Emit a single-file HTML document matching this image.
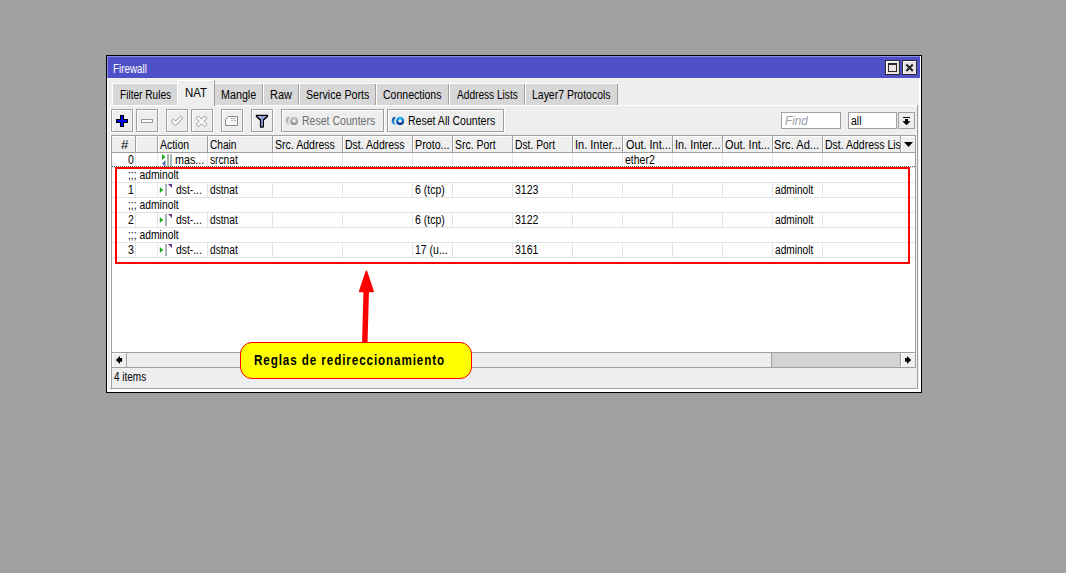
<!DOCTYPE html>
<html><head><meta charset="utf-8"><style>
html,body{margin:0;padding:0;}
body{width:1066px;height:573px;background:#a0a0a0;position:relative;overflow:hidden;font-family:"Liberation Sans", sans-serif;}
.t{position:absolute;white-space:nowrap;font-size:12px;line-height:13px;color:#000;transform-origin:0 0;}
svg{position:absolute;left:0;top:0;}
</style></head><body>
<svg width="1066" height="573" viewBox="0 0 1066 573" shape-rendering="crispEdges">
<rect x="106" y="55" width="816" height="338" fill="#000"/>
<rect x="107" y="56" width="814" height="336" fill="#ffffff"/>
<rect x="108" y="78" width="811" height="311" fill="#eeeeee"/>
<rect x="107" y="56" width="813" height="22" fill="#8c8ce4"/>
<rect x="108" y="57" width="812" height="21" fill="#5050c8"/>
<rect x="920" y="56" width="1" height="336" fill="#ffffff"/>
<rect x="885" y="60" width="15" height="15" fill="#2b2b2b"/>
<rect x="886" y="61" width="13" height="13" fill="#e8e4e8"/>
<rect x="886" y="61" width="13" height="1" fill="#ffffff"/>
<rect x="886" y="61" width="1" height="13" fill="#ffffff"/>
<rect x="902" y="60" width="15" height="15" fill="#2b2b2b"/>
<rect x="903" y="61" width="13" height="13" fill="#e8e4e8"/>
<rect x="903" y="61" width="13" height="1" fill="#ffffff"/>
<rect x="903" y="61" width="1" height="13" fill="#ffffff"/>
<rect x="888" y="63" width="9" height="9" fill="#2b2b2b"/>
<rect x="889" y="65" width="7" height="6" fill="#e8e4e8"/>
<rect x="110" y="105" width="808" height="1" fill="#ffffff"/>
<rect x="110" y="105" width="1" height="284" fill="#ffffff"/>
<rect x="917" y="105" width="1" height="284" fill="#a0a0a0"/>
<rect x="110" y="388" width="808" height="1" fill="#a0a0a0"/>
<rect x="113" y="84" width="64" height="21" fill="#d7d7d7"/>
<rect x="113" y="83" width="64" height="1" fill="#ffffff"/>
<rect x="112" y="83" width="1" height="22" fill="#ffffff"/>
<rect x="177" y="80" width="38" height="26" fill="#ffffff"/>
<rect x="178" y="81" width="36" height="25" fill="#eeeeee"/>
<rect x="214" y="80" width="1" height="26" fill="#a0a0a0"/>
<rect x="215" y="84" width="48" height="21" fill="#d7d7d7"/>
<rect x="262" y="84" width="1" height="21" fill="#a0a0a0"/>
<rect x="215" y="83" width="48" height="1" fill="#ffffff"/>
<rect x="264" y="84" width="35" height="21" fill="#d7d7d7"/>
<rect x="298" y="84" width="1" height="21" fill="#a0a0a0"/>
<rect x="264" y="83" width="35" height="1" fill="#ffffff"/>
<rect x="263" y="83" width="1" height="22" fill="#ffffff"/>
<rect x="300" y="84" width="76" height="21" fill="#d7d7d7"/>
<rect x="375" y="84" width="1" height="21" fill="#a0a0a0"/>
<rect x="300" y="83" width="76" height="1" fill="#ffffff"/>
<rect x="299" y="83" width="1" height="22" fill="#ffffff"/>
<rect x="377" y="84" width="72" height="21" fill="#d7d7d7"/>
<rect x="448" y="84" width="1" height="21" fill="#a0a0a0"/>
<rect x="377" y="83" width="72" height="1" fill="#ffffff"/>
<rect x="376" y="83" width="1" height="22" fill="#ffffff"/>
<rect x="450" y="84" width="75" height="21" fill="#d7d7d7"/>
<rect x="524" y="84" width="1" height="21" fill="#a0a0a0"/>
<rect x="450" y="83" width="75" height="1" fill="#ffffff"/>
<rect x="449" y="83" width="1" height="22" fill="#ffffff"/>
<rect x="526" y="84" width="92" height="21" fill="#d7d7d7"/>
<rect x="617" y="84" width="1" height="21" fill="#a0a0a0"/>
<rect x="526" y="83" width="92" height="1" fill="#ffffff"/>
<rect x="525" y="83" width="1" height="22" fill="#ffffff"/>
<rect x="111" y="109" width="22" height="23" fill="#a0a0a0"/>
<rect x="112" y="110" width="20" height="21" fill="#ffffff"/>
<rect x="113" y="111" width="19" height="20" fill="#eeeeee"/>
<rect x="111" y="132" width="23" height="1" fill="#ffffff"/>
<rect x="133" y="109" width="1" height="24" fill="#ffffff"/>
<rect x="136" y="109" width="22" height="23" fill="#a0a0a0"/>
<rect x="137" y="110" width="20" height="21" fill="#ffffff"/>
<rect x="138" y="111" width="19" height="20" fill="#eeeeee"/>
<rect x="136" y="132" width="23" height="1" fill="#ffffff"/>
<rect x="158" y="109" width="1" height="24" fill="#ffffff"/>
<rect x="166" y="109" width="22" height="23" fill="#a0a0a0"/>
<rect x="167" y="110" width="20" height="21" fill="#ffffff"/>
<rect x="168" y="111" width="19" height="20" fill="#eeeeee"/>
<rect x="166" y="132" width="23" height="1" fill="#ffffff"/>
<rect x="188" y="109" width="1" height="24" fill="#ffffff"/>
<rect x="191" y="109" width="22" height="23" fill="#a0a0a0"/>
<rect x="192" y="110" width="20" height="21" fill="#ffffff"/>
<rect x="193" y="111" width="19" height="20" fill="#eeeeee"/>
<rect x="191" y="132" width="23" height="1" fill="#ffffff"/>
<rect x="213" y="109" width="1" height="24" fill="#ffffff"/>
<rect x="221" y="109" width="22" height="23" fill="#a0a0a0"/>
<rect x="222" y="110" width="20" height="21" fill="#ffffff"/>
<rect x="223" y="111" width="19" height="20" fill="#eeeeee"/>
<rect x="221" y="132" width="23" height="1" fill="#ffffff"/>
<rect x="243" y="109" width="1" height="24" fill="#ffffff"/>
<rect x="251" y="109" width="22" height="23" fill="#a0a0a0"/>
<rect x="252" y="110" width="20" height="21" fill="#ffffff"/>
<rect x="253" y="111" width="19" height="20" fill="#eeeeee"/>
<rect x="251" y="132" width="23" height="1" fill="#ffffff"/>
<rect x="273" y="109" width="1" height="24" fill="#ffffff"/>
<rect x="281" y="109" width="103" height="23" fill="#a0a0a0"/>
<rect x="282" y="110" width="101" height="21" fill="#ffffff"/>
<rect x="283" y="111" width="100" height="20" fill="#eeeeee"/>
<rect x="281" y="132" width="104" height="1" fill="#ffffff"/>
<rect x="384" y="109" width="1" height="24" fill="#ffffff"/>
<rect x="387" y="109" width="117" height="23" fill="#a0a0a0"/>
<rect x="388" y="110" width="115" height="21" fill="#ffffff"/>
<rect x="389" y="111" width="114" height="20" fill="#eeeeee"/>
<rect x="387" y="132" width="118" height="1" fill="#ffffff"/>
<rect x="504" y="109" width="1" height="24" fill="#ffffff"/>
<rect x="141" y="119" width="12" height="4" fill="#9a9a9a"/>
<rect x="142" y="120" width="10" height="2" fill="#fafafa"/>
<rect x="226.6" y="117.6" width="1.6" height="1.6" fill="#b8b8b8"/>
<rect x="781" y="112" width="60" height="17" fill="#a0a0a0"/>
<rect x="782" y="113" width="58" height="15" fill="#ffffff"/>
<rect x="848" y="112" width="49" height="17" fill="#a0a0a0"/>
<rect x="849" y="113" width="47" height="15" fill="#ffffff"/>
<rect x="898" y="112" width="17" height="17" fill="#a0a0a0"/>
<rect x="899" y="113" width="15" height="15" fill="#eeeeee"/>
<rect x="903" y="117" width="7" height="1" fill="#000"/>
<rect x="111" y="135" width="805" height="233" fill="#a0a0a0"/>
<rect x="112" y="136" width="803" height="231" fill="#ffffff"/>
<rect x="112" y="136" width="803" height="16" fill="#efefef"/>
<rect x="112" y="136" width="803" height="1" fill="#ffffff"/>
<rect x="112" y="152" width="803" height="1" fill="#a0a0a0"/>
<rect x="135" y="136" width="1" height="16" fill="#a0a0a0"/>
<rect x="136" y="136" width="1" height="16" fill="#ffffff"/>
<rect x="157" y="136" width="1" height="16" fill="#a0a0a0"/>
<rect x="158" y="136" width="1" height="16" fill="#ffffff"/>
<rect x="207" y="136" width="1" height="16" fill="#a0a0a0"/>
<rect x="208" y="136" width="1" height="16" fill="#ffffff"/>
<rect x="272" y="136" width="1" height="16" fill="#a0a0a0"/>
<rect x="273" y="136" width="1" height="16" fill="#ffffff"/>
<rect x="342" y="136" width="1" height="16" fill="#a0a0a0"/>
<rect x="343" y="136" width="1" height="16" fill="#ffffff"/>
<rect x="412" y="136" width="1" height="16" fill="#a0a0a0"/>
<rect x="413" y="136" width="1" height="16" fill="#ffffff"/>
<rect x="452" y="136" width="1" height="16" fill="#a0a0a0"/>
<rect x="453" y="136" width="1" height="16" fill="#ffffff"/>
<rect x="512" y="136" width="1" height="16" fill="#a0a0a0"/>
<rect x="513" y="136" width="1" height="16" fill="#ffffff"/>
<rect x="572" y="136" width="1" height="16" fill="#a0a0a0"/>
<rect x="573" y="136" width="1" height="16" fill="#ffffff"/>
<rect x="622" y="136" width="1" height="16" fill="#a0a0a0"/>
<rect x="623" y="136" width="1" height="16" fill="#ffffff"/>
<rect x="672" y="136" width="1" height="16" fill="#a0a0a0"/>
<rect x="673" y="136" width="1" height="16" fill="#ffffff"/>
<rect x="722" y="136" width="1" height="16" fill="#a0a0a0"/>
<rect x="723" y="136" width="1" height="16" fill="#ffffff"/>
<rect x="772" y="136" width="1" height="16" fill="#a0a0a0"/>
<rect x="773" y="136" width="1" height="16" fill="#ffffff"/>
<rect x="822" y="136" width="1" height="16" fill="#a0a0a0"/>
<rect x="823" y="136" width="1" height="16" fill="#ffffff"/>
<rect x="900" y="136" width="1" height="16" fill="#a0a0a0"/>
<rect x="901" y="136" width="1" height="16" fill="#ffffff"/>
<rect x="112" y="167" width="803" height="1" fill="#e3e3e3"/>
<rect x="135" y="153" width="1" height="14" fill="#e3e3e3"/>
<rect x="157" y="153" width="1" height="14" fill="#e3e3e3"/>
<rect x="207" y="153" width="1" height="14" fill="#e3e3e3"/>
<rect x="272" y="153" width="1" height="14" fill="#e3e3e3"/>
<rect x="342" y="153" width="1" height="14" fill="#e3e3e3"/>
<rect x="412" y="153" width="1" height="14" fill="#e3e3e3"/>
<rect x="452" y="153" width="1" height="14" fill="#e3e3e3"/>
<rect x="512" y="153" width="1" height="14" fill="#e3e3e3"/>
<rect x="572" y="153" width="1" height="14" fill="#e3e3e3"/>
<rect x="622" y="153" width="1" height="14" fill="#e3e3e3"/>
<rect x="672" y="153" width="1" height="14" fill="#e3e3e3"/>
<rect x="722" y="153" width="1" height="14" fill="#e3e3e3"/>
<rect x="772" y="153" width="1" height="14" fill="#e3e3e3"/>
<rect x="822" y="153" width="1" height="14" fill="#e3e3e3"/>
<rect x="167" y="154" width="2" height="13" fill="#a9b7b3"/>
<rect x="170" y="154" width="2" height="13" fill="#a9b7b3"/>
<rect x="112" y="182" width="803" height="1" fill="#e3e3e3"/>
<rect x="112" y="197" width="803" height="1" fill="#e3e3e3"/>
<rect x="135" y="183" width="1" height="14" fill="#e3e3e3"/>
<rect x="157" y="183" width="1" height="14" fill="#e3e3e3"/>
<rect x="207" y="183" width="1" height="14" fill="#e3e3e3"/>
<rect x="272" y="183" width="1" height="14" fill="#e3e3e3"/>
<rect x="342" y="183" width="1" height="14" fill="#e3e3e3"/>
<rect x="412" y="183" width="1" height="14" fill="#e3e3e3"/>
<rect x="452" y="183" width="1" height="14" fill="#e3e3e3"/>
<rect x="512" y="183" width="1" height="14" fill="#e3e3e3"/>
<rect x="572" y="183" width="1" height="14" fill="#e3e3e3"/>
<rect x="622" y="183" width="1" height="14" fill="#e3e3e3"/>
<rect x="672" y="183" width="1" height="14" fill="#e3e3e3"/>
<rect x="722" y="183" width="1" height="14" fill="#e3e3e3"/>
<rect x="772" y="183" width="1" height="14" fill="#e3e3e3"/>
<rect x="822" y="183" width="1" height="14" fill="#e3e3e3"/>
<rect x="165" y="184" width="2" height="12" fill="#a9b7b3"/>
<rect x="112" y="212" width="803" height="1" fill="#e3e3e3"/>
<rect x="112" y="227" width="803" height="1" fill="#e3e3e3"/>
<rect x="135" y="213" width="1" height="14" fill="#e3e3e3"/>
<rect x="157" y="213" width="1" height="14" fill="#e3e3e3"/>
<rect x="207" y="213" width="1" height="14" fill="#e3e3e3"/>
<rect x="272" y="213" width="1" height="14" fill="#e3e3e3"/>
<rect x="342" y="213" width="1" height="14" fill="#e3e3e3"/>
<rect x="412" y="213" width="1" height="14" fill="#e3e3e3"/>
<rect x="452" y="213" width="1" height="14" fill="#e3e3e3"/>
<rect x="512" y="213" width="1" height="14" fill="#e3e3e3"/>
<rect x="572" y="213" width="1" height="14" fill="#e3e3e3"/>
<rect x="622" y="213" width="1" height="14" fill="#e3e3e3"/>
<rect x="672" y="213" width="1" height="14" fill="#e3e3e3"/>
<rect x="722" y="213" width="1" height="14" fill="#e3e3e3"/>
<rect x="772" y="213" width="1" height="14" fill="#e3e3e3"/>
<rect x="822" y="213" width="1" height="14" fill="#e3e3e3"/>
<rect x="165" y="214" width="2" height="12" fill="#a9b7b3"/>
<rect x="112" y="242" width="803" height="1" fill="#e3e3e3"/>
<rect x="112" y="257" width="803" height="1" fill="#e3e3e3"/>
<rect x="135" y="243" width="1" height="14" fill="#e3e3e3"/>
<rect x="157" y="243" width="1" height="14" fill="#e3e3e3"/>
<rect x="207" y="243" width="1" height="14" fill="#e3e3e3"/>
<rect x="272" y="243" width="1" height="14" fill="#e3e3e3"/>
<rect x="342" y="243" width="1" height="14" fill="#e3e3e3"/>
<rect x="412" y="243" width="1" height="14" fill="#e3e3e3"/>
<rect x="452" y="243" width="1" height="14" fill="#e3e3e3"/>
<rect x="512" y="243" width="1" height="14" fill="#e3e3e3"/>
<rect x="572" y="243" width="1" height="14" fill="#e3e3e3"/>
<rect x="622" y="243" width="1" height="14" fill="#e3e3e3"/>
<rect x="672" y="243" width="1" height="14" fill="#e3e3e3"/>
<rect x="722" y="243" width="1" height="14" fill="#e3e3e3"/>
<rect x="772" y="243" width="1" height="14" fill="#e3e3e3"/>
<rect x="822" y="243" width="1" height="14" fill="#e3e3e3"/>
<rect x="165" y="244" width="2" height="12" fill="#a9b7b3"/>
<rect x="116" y="168" width="793" height="95" fill="none" stroke="#ff0000" stroke-width="2"/>
<rect x="112" y="352" width="803" height="1" fill="#a0a0a0"/>
<rect x="112" y="353" width="803" height="14" fill="#efefef"/>
<rect x="112" y="367" width="803" height="1" fill="#a0a0a0"/>
<rect x="112" y="353" width="1" height="14" fill="#ffffff"/>
<rect x="112" y="353" width="14" height="1" fill="#ffffff"/>
<rect x="126" y="353" width="1" height="14" fill="#a0a0a0"/>
<rect x="771" y="353" width="130" height="14" fill="#a0a0a0"/>
<rect x="772" y="353" width="128" height="14" fill="#d4d4d4"/>
<rect x="900" y="353" width="1" height="14" fill="#a0a0a0"/>
<rect x="901" y="353" width="14" height="14" fill="#efefef"/>
<rect x="901" y="353" width="1" height="14" fill="#ffffff"/>
<rect x="901" y="353" width="14" height="1" fill="#ffffff"/>
<rect x="111" y="368" width="1" height="20" fill="#a0a0a0"/>
</svg>
<svg width="1066" height="573" viewBox="0 0 1066 573">
<path d="M906.3 64.6 L912.8 71 M912.8 64.6 L906.3 71" stroke="#262626" stroke-width="2.1" stroke-linecap="butt"/>
<path d="M120 115 H124 V119 H128 V123 H124 V127 H120 V123 H116 V119 H120 Z" fill="#000"/>
<path d="M121 116 H123 V120 H127 V122 H123 V126 H121 V122 H117 V120 H121 Z" fill="#0000ff"/>
<path d="M171.00 121.40 L173.50 119.00 L175.50 121.20 L180.40 116.20 L182.90 118.20 L175.50 125.90 Z" fill="#f7f7f7" stroke="#9a9a9a" stroke-width="1" stroke-linejoin="miter"/>
<path d="M196.10 118.35 L198.50 115.95 L201.55 119.00 L204.60 115.95 L207.00 118.35 L203.95 121.40 L207.00 124.45 L204.60 126.85 L201.55 123.80 L198.50 126.85 L196.10 124.45 L199.15 121.40 Z" fill="#f7f7f7" stroke="#9a9a9a" stroke-width="1"/>
<path d="M225.5 119.5 L228.5 116.5 H237.5 V125.5 H225.5 Z" fill="#f8f8f8" stroke="#888888" stroke-width="1"/>
<path d="M231 118.5 h1.6 M233.3 118.5 h1.8 M231.3 120.5 h1.4 M234.2 120.5 h1.8" stroke="#9a9a9a" stroke-width="1"/>
<defs><linearGradient id="fg" x1="0" x2="1" y1="0" y2="0"><stop offset="0" stop-color="#d8def8"/><stop offset="0.55" stop-color="#8898e0"/><stop offset="1" stop-color="#b8c2f0"/></linearGradient></defs>
<path d="M255.8 114.7 H268.1 V116.8 L264 120.4 V126.9 L263.2 127.8 H260.3 L259.9 127.2 V120.4 L255.8 116.8 Z" fill="#000"/>
<path d="M257.2 116 H266.7 L262.9 119.6 V126.6 H261.1 V119.6 Z" fill="url(#fg)"/>
<defs><linearGradient id="rg1" x1="0" x2="0" y1="0" y2="1"><stop offset="0" stop-color="#c4c4c4"/><stop offset="1" stop-color="#909090"/></linearGradient><linearGradient id="rg2" x1="0" x2="0" y1="0" y2="1"><stop offset="0" stop-color="#a0a0a0"/><stop offset="1" stop-color="#d0d0d0"/></linearGradient><linearGradient id="rb1" x1="0" x2="0" y1="0" y2="1"><stop offset="0" stop-color="#22b4fa"/><stop offset="1" stop-color="#002f8c"/></linearGradient><linearGradient id="rb2" x1="0" x2="0" y1="0" y2="1"><stop offset="0" stop-color="#0a3a94"/><stop offset="1" stop-color="#30b8fa"/></linearGradient></defs>
<circle cx="294.1" cy="120.9" r="2.9" fill="none" stroke="url(#rg1)" stroke-width="2.3"/>
<path d="M289.8 116.80000000000001 A4.1 4.1 0 0 0 289.8 125.0 A6.2 6.2 0 0 1 289.8 116.80000000000001 Z" fill="url(#rg2)"/>
<circle cx="400.1" cy="120.9" r="2.9" fill="none" stroke="url(#rb1)" stroke-width="2.3"/>
<path d="M395.8 116.80000000000001 A4.1 4.1 0 0 0 395.8 125.0 A6.2 6.2 0 0 1 395.8 116.80000000000001 Z" fill="url(#rb2)"/>
<path d="M905 119 H908 V121.3 H910.6 L906.5 125.3 L902.4 121.3 H905 Z" fill="#000"/>
<path d="M904 142 H913 L908.5 147 Z" fill="#000"/>
<path d="M162 154 L165.5 157 L162 160 Z" fill="#22a822"/>
<path d="M165.5 160 L162 163.5 L165.5 167 Z" fill="#4a78a8"/>
<path d="M159.8 186.9 L163.3 189.9 L159.8 193 Z" fill="#22a822"/>
<path d="M168 184 H172 V188 Z" fill="#702c8c"/>
<path d="M159.8 216.9 L163.3 219.9 L159.8 223 Z" fill="#22a822"/>
<path d="M168 214 H172 V218 Z" fill="#702c8c"/>
<path d="M159.8 246.9 L163.3 249.9 L159.8 253 Z" fill="#22a822"/>
<path d="M168 244 H172 V248 Z" fill="#702c8c"/>
<line x1="112" y1="166.5" x2="915" y2="166.5" stroke="#5a5a5a" stroke-width="1" stroke-dasharray="1 1"/>
<path d="M115.8 360 L120 355.9 V358.1 H122.1 V361.8 H120 V364 Z" fill="#000"/>
<path d="M911.2 360 L907 355.9 V358.1 H905.1 V361.8 H907 V364 Z" fill="#000"/>
<path d="M366.2 292 L364.8 342" stroke="#ff0000" stroke-width="5.5"/>
<path d="M366.4 271.5 L359.8 291.3 L373 291.3 Z" fill="#ff0000" stroke="#ff0000" stroke-width="1.8" stroke-linejoin="round"/>
<rect x="240.5" y="342.5" width="231" height="36" rx="11.5" fill="#ffff00" stroke="#ff0000" stroke-width="1"/>
</svg>
<div class="t" style="left:112.58px;top:63px;color:#fff;transform:scaleX(0.8200);">Firewall</div>
<div class="t" style="left:119.56px;top:89px;transform:scaleX(0.8417);">Filter Rules</div>
<div class="t" style="left:185.45px;top:87px;transform:scaleX(0.9545);">NAT</div>
<div class="t" style="left:220.81px;top:89px;transform:scaleX(0.8947);">Mangle</div>
<div class="t" style="left:269.79px;top:89px;transform:scaleX(0.9130);">Raw</div>
<div class="t" style="left:305.71px;top:89px;transform:scaleX(0.8857);">Service Ports</div>
<div class="t" style="left:383.00px;top:89px;transform:scaleX(0.8761);">Connections</div>
<div class="t" style="left:456.90px;top:89px;transform:scaleX(0.8444);">Address Lists</div>
<div class="t" style="left:532.03px;top:89px;transform:scaleX(0.8719);">Layer7 Protocols</div>
<div class="t" style="left:301.72px;top:115px;color:#6d6d6d;transform:scaleX(0.8780);">Reset Counters</div>
<div class="t" style="left:407.92px;top:115px;transform:scaleX(0.8776);">Reset All Counters</div>
<div class="t" style="left:784.80px;top:115px;color:#9c9cac;font-style:italic;transform:scaleX(0.9792);">Find</div>
<div class="t" style="left:851.40px;top:115px;transform:scaleX(0.8750);">all</div>
<div class="t" style="left:120.70px;top:139px;transform:scaleX(1.1000);">#</div>
<div class="t" style="left:160.00px;top:139px;transform:scaleX(0.8697);">Action</div>
<div class="t" style="left:210.00px;top:139px;transform:scaleX(0.8452);">Chain</div>
<div class="t" style="left:274.62px;top:139px;transform:scaleX(0.8806);">Src. Address</div>
<div class="t" style="left:345.02px;top:139px;transform:scaleX(0.8761);">Dst. Address</div>
<div class="t" style="left:415.11px;top:139px;transform:scaleX(0.8919);">Proto...</div>
<div class="t" style="left:454.93px;top:139px;transform:scaleX(0.8696);">Src. Port</div>
<div class="t" style="left:515.04px;top:139px;transform:scaleX(0.8587);">Dst. Port</div>
<div class="t" style="left:574.78px;top:139px;transform:scaleX(0.9167);">In. Inter...</div>
<div class="t" style="left:625.50px;top:139px;transform:scaleX(0.9062);">Out. Int...</div>
<div class="t" style="left:675.19px;top:139px;transform:scaleX(0.9083);">In. Inter...</div>
<div class="t" style="left:725.40px;top:139px;transform:scaleX(0.9083);">Out. Int...</div>
<div class="t" style="left:774.47px;top:139px;transform:scaleX(0.9255);">Src. Ad...</div>
<div class="t" style="left:824.92px;top:139px;transform:scaleX(0.8750);width:85.8px;overflow:hidden;">Dst. Address Lis</div>
<div class="t" style="left:127.75px;top:154px;transform:scaleX(0.8750);">0</div>
<div class="t" style="left:175.00px;top:154px;transform:scaleX(0.8968);">mas...</div>
<div class="t" style="left:210.00px;top:154px;transform:scaleX(0.8485);">srcnat</div>
<div class="t" style="left:625.40px;top:154px;transform:scaleX(0.8750);">ether2</div>
<div class="t" style="left:128.04px;top:169px;transform:scaleX(0.8621);">;;; adminolt</div>
<div class="t" style="left:127.75px;top:184px;transform:scaleX(0.8750);">1</div>
<div class="t" style="left:176.40px;top:184px;transform:scaleX(0.8621);">dst-...</div>
<div class="t" style="left:210.00px;top:184px;transform:scaleX(0.8485);">dstnat</div>
<div class="t" style="left:415.40px;top:184px;transform:scaleX(0.8750);">6 (tcp)</div>
<div class="t" style="left:514.52px;top:184px;transform:scaleX(0.8750);">3123</div>
<div class="t" style="left:775.40px;top:184px;transform:scaleX(0.8444);">adminolt</div>
<div class="t" style="left:128.04px;top:199px;transform:scaleX(0.8621);">;;; adminolt</div>
<div class="t" style="left:127.75px;top:214px;transform:scaleX(0.8750);">2</div>
<div class="t" style="left:176.40px;top:214px;transform:scaleX(0.8621);">dst-...</div>
<div class="t" style="left:210.00px;top:214px;transform:scaleX(0.8485);">dstnat</div>
<div class="t" style="left:415.40px;top:214px;transform:scaleX(0.8750);">6 (tcp)</div>
<div class="t" style="left:514.52px;top:214px;transform:scaleX(0.8750);">3122</div>
<div class="t" style="left:775.40px;top:214px;transform:scaleX(0.8444);">adminolt</div>
<div class="t" style="left:128.04px;top:229px;transform:scaleX(0.8621);">;;; adminolt</div>
<div class="t" style="left:127.75px;top:244px;transform:scaleX(0.8750);">3</div>
<div class="t" style="left:176.40px;top:244px;transform:scaleX(0.8621);">dst-...</div>
<div class="t" style="left:210.00px;top:244px;transform:scaleX(0.8485);">dstnat</div>
<div class="t" style="left:414.52px;top:244px;transform:scaleX(0.8750);">17 (u...</div>
<div class="t" style="left:514.52px;top:244px;transform:scaleX(0.8750);">3161</div>
<div class="t" style="left:775.40px;top:244px;transform:scaleX(0.8444);">adminolt</div>
<div class="t" style="left:114.30px;top:371px;transform:scaleX(0.8308);">4 items</div>
<div class="t" style="left:254.47px;top:354px;font-size:14px;font-weight:bold;letter-spacing:1.1px;transform:scaleX(0.8308);">Reglas de redireccionamiento</div>
</body></html>
